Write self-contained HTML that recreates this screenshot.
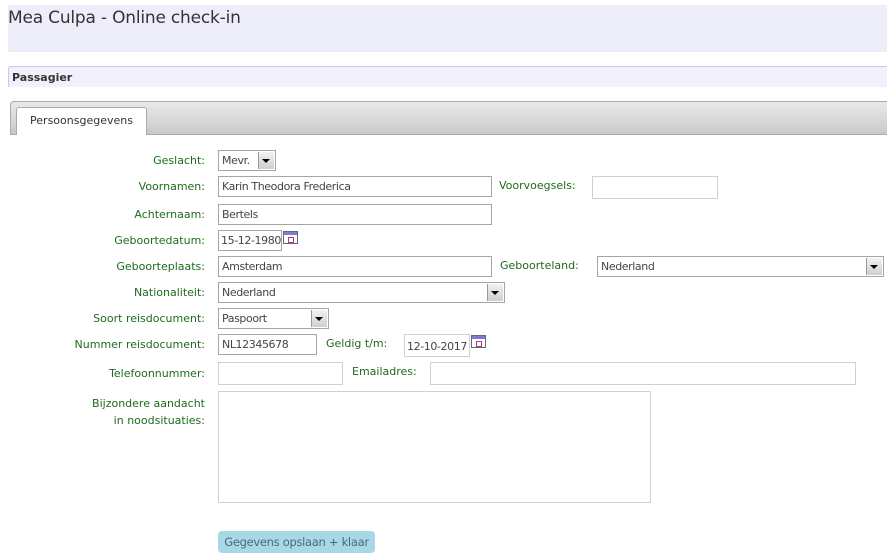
<!DOCTYPE html>
<html><head><meta charset="utf-8"><style>
*{box-sizing:border-box;margin:0;padding:0}
body{width:887px;height:559px;background:#fff;font-family:"DejaVu Sans","Liberation Sans",sans-serif;font-size:11px;color:#333;position:relative;overflow:hidden}
.a{position:absolute;white-space:nowrap}
.hd{left:8px;top:5px;width:879px;height:47px;background:#eeeefb}
.t{left:8px;top:8px;font-size:17px;color:#333;letter-spacing:-0.2px}
.pb{left:8px;top:66px;width:879px;height:21px;background:#f1f0fc;border-top:1px solid #c8c6ea;border-left:1px solid #c8c6ea;border-radius:3px 0 0 0;font-weight:bold;font-size:11px;padding:4px 3px;color:#333}
.tb{left:10px;top:101px;width:877px;height:34px;background:linear-gradient(#eaeaea,#c9c9c9);border:1px solid #aaa;border-right:none;border-radius:4px 0 0 0}
.tab{left:16px;top:107px;width:131px;height:28px;background:#fff;border:1px solid #aaa;border-bottom:none;border-radius:3px 3px 0 0;text-align:center;padding-top:6px;font-size:11px}
.l{color:#1e6b1e;text-align:right;width:200px;left:5px}
.l2{color:#1e6b1e}
.i{border:1px solid #a5a5a5;background:#fff;padding:3px 3px;font-size:11px;letter-spacing:-0.4px;color:#444;height:21px;overflow:hidden}
.i.lt{border-color:#d0d0d0}
.s:after{content:"";position:absolute;right:1px;top:1px;width:15px;height:17px;background:linear-gradient(#f2f2f2,#cfcfcf);border-left:1px solid #999}
.s:before{content:"";position:absolute;right:5px;top:8px;border:4px solid transparent;border-top:4px solid #000;z-index:2;border-bottom:none}
.cal{width:15px;height:13px;border:1px solid #667;background:#fff}
.cal:before{content:"";position:absolute;left:0;top:0;right:0;height:3px;background:#7b7bd8}
.cal:after{content:"";position:absolute;left:4px;top:5px;width:4px;height:4px;border:1px solid #a04080}
.btn{left:218px;top:531px;width:157px;height:22px;background:#a8d8e8;border-radius:4px;color:#4a6a78;font-size:11.5px;letter-spacing:-0.3px;text-align:center;padding-top:4px}
</style></head><body>
<div class="a hd"></div>
<div class="a t">Mea Culpa - Online check-in</div>
<div class="a pb">Passagier</div>
<div class="a tb"></div>
<div class="a tab">Persoonsgegevens</div>

<div class="a l" style="top:154px">Geslacht:</div>
<div class="a i s" style="left:218px;top:150px;width:58px">Mevr.</div>

<div class="a l" style="top:180px">Voornamen:</div>
<div class="a i" style="left:218px;top:176px;width:274px">Karin Theodora Frederica</div>
<div class="a l2" style="left:499px;top:179px">Voorvoegsels:</div>
<div class="a i lt" style="left:592px;top:176px;width:126px;height:23px"></div>

<div class="a l" style="top:208px">Achternaam:</div>
<div class="a i" style="left:218px;top:204px;width:274px">Bertels</div>

<div class="a l" style="top:234px">Geboortedatum:</div>
<div class="a i" style="left:218px;top:230px;width:64px;padding-left:2px">15-12-1980</div>
<div class="a cal" style="left:283px;top:231px"></div>

<div class="a l" style="top:260px">Geboorteplaats:</div>
<div class="a i" style="left:218px;top:256px;width:274px">Amsterdam</div>
<div class="a l2" style="left:500px;top:259px">Geboorteland:</div>
<div class="a i s" style="left:597px;top:256px;width:287px">Nederland</div>

<div class="a l" style="top:286px">Nationaliteit:</div>
<div class="a i s" style="left:218px;top:282px;width:287px">Nederland</div>

<div class="a l" style="top:312px">Soort reisdocument:</div>
<div class="a i s" style="left:218px;top:308px;width:111px">Paspoort</div>

<div class="a l" style="top:338px">Nummer reisdocument:</div>
<div class="a i" style="left:218px;top:334px;width:99px">NL12345678</div>
<div class="a l2" style="left:326px;top:337px">Geldig t/m:</div>
<div class="a i lt" style="left:404px;top:334px;width:66px;height:23px;padding:5px 2px 0">12-10-2017</div>
<div class="a cal" style="left:471px;top:335px"></div>

<div class="a l" style="top:367px">Telefoonnummer:</div>
<div class="a i lt" style="left:218px;top:362px;width:125px;height:23px"></div>
<div class="a l2" style="left:352px;top:365px">Emailadres:</div>
<div class="a i lt" style="left:430px;top:362px;width:426px;height:23px"></div>

<div class="a l" style="top:395px;line-height:17px">Bijzondere aandacht<br>in noodsituaties:</div>
<div class="a i lt" style="left:218px;top:391px;width:433px;height:112px"></div>

<div class="a btn">Gegevens opslaan + klaar</div>
</body></html>
